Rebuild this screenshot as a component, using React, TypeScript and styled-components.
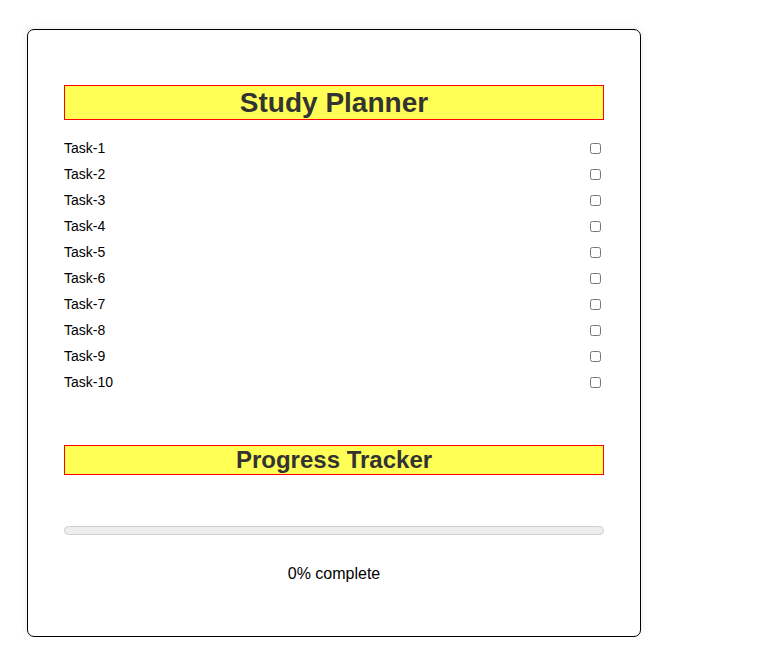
import React, { useState } from "react";
import styled, { createGlobalStyle } from "styled-components";

const Global = createGlobalStyle`
  html, body { margin: 0; padding: 0; background: #ffffff; }
  body { font-family: "Liberation Sans", Arial, sans-serif; }
`;

const Card = styled.div`
  box-sizing: border-box;
  width: 614px;
  height: 608px;
  margin: 29px 0 0 27px;
  padding: 55px 36px 0 36px;
  border: 1px solid #000;
  border-radius: 7px;
  background: #fff;
  box-shadow: 0 0 10px rgba(0, 0, 0, 0.08);
`;

const Heading = styled.h1<{ $size: number; $height: number }>`
  box-sizing: border-box;
  margin: 0;
  height: ${(p) => p.$height}px;
  background: #ffff55;
  border: 1px solid #ff0000;
  color: #333;
  font-size: ${(p) => p.$size}px;
  font-weight: bold;
  text-align: center;
  line-height: ${(p) => p.$height - 2}px;
`;

const TaskList = styled.ul`
  list-style: none;
  margin: 15px 0 0 0;
  padding: 0;
`;

const TaskRow = styled.li`
  display: flex;
  align-items: center;
  justify-content: space-between;
  height: 26px;
  font-size: 14px;
  color: #000;
`;

const Check = styled.input`
  margin: 3px 3px 3px 4px;
  width: 11px;
  height: 11px;
`;

const Section = styled.div`
  margin-top: 50px;
`;

const Bar = styled.div`
  box-sizing: border-box;
  margin-top: 51px;
  height: 9px;
  border: 1px solid #cfcfcf;
  border-radius: 5px;
  background: #eeeeee;
  overflow: hidden;
`;

const Fill = styled.div`
  height: 100%;
  background: #4caf50;
`;

const Percent = styled.p`
  margin: 30px 0 0 0;
  text-align: center;
  font-size: 16px;
  color: #000;
`;

export default function App() {
  const [done, setDone] = useState<boolean[]>(Array(10).fill(false));
  const pct = Math.round((done.filter(Boolean).length / done.length) * 100);
  return (
    <>
      <Global />
      <Card>
        <Heading $size={28} $height={35}>Study Planner</Heading>
        <TaskList>
          {done.map((d, i) => (
            <TaskRow key={i}>
              <span>Task-{i + 1}</span>
              <Check
                type="checkbox"
                checked={d}
                onChange={() =>
                  setDone((prev) => prev.map((v, j) => (j === i ? !v : v)))
                }
              />
            </TaskRow>
          ))}
        </TaskList>
        <Section>
          <Heading $size={24} $height={30}>Progress Tracker</Heading>
          <Bar>
            <Fill style={{ width: `${pct}%` }} />
          </Bar>
          <Percent>{pct}% complete</Percent>
        </Section>
      </Card>
    </>
  );
}
